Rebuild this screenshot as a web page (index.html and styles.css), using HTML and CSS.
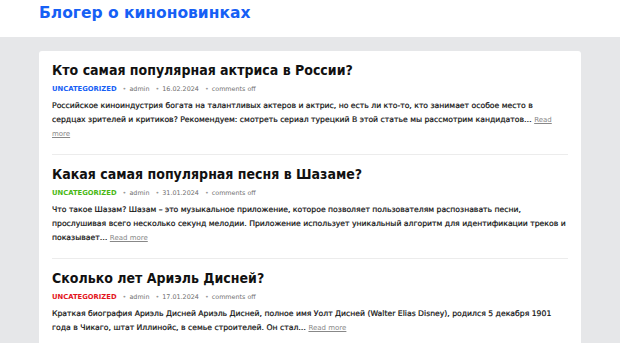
FILE: index.html
```html
<!DOCTYPE html>
<html>
  <head>
    <title>Блогер о киноновинках</title>
    <link rel="stylesheet" href="styles.css">
  </head>
  <body>
    <div class="topbar">
      <a class="site-title" href="#">Блогер о киноновинках</a>
    </div>
    <div class="page">
      <div class="content">
        <div class="post">
          <h2 class="post-title">Кто самая популярная актриса в России?</h2>
          <div class="meta">
            <span class="cat cat-blue">Uncategorized</span>
            <span class="dot">•</span> admin
            <span class="dot">•</span> 16.02.2024
            <span class="dot">•</span> comments off
          </div>
          <p class="excerpt">Российское киноиндустрия богата на талантливых актеров и актрис, но есть ли кто-то, кто занимает особое место в сердцах зрителей и критиков? Рекомендуем: смотреть сериал турецкий В этой статье мы рассмотрим кандидатов… <a class="more" href="#">Read more</a></p>
        </div>
        <div class="post">
          <h2 class="post-title">Какая самая популярная песня в Шазаме?</h2>
          <div class="meta">
            <span class="cat cat-green">Uncategorized</span>
            <span class="dot">•</span> admin
            <span class="dot">•</span> 31.01.2024
            <span class="dot">•</span> comments off
          </div>
          <p class="excerpt">Что такое Шазам? Шазам – это музыкальное приложение, которое позволяет пользователям распознавать песни, прослушивая всего несколько секунд мелодии. Приложение использует уникальный алгоритм для идентификации треков и показывает… <a class="more" href="#">Read more</a></p>
        </div>
        <div class="post">
          <h2 class="post-title">Сколько лет Ариэль Дисней?</h2>
          <div class="meta">
            <span class="cat cat-red">Uncategorized</span>
            <span class="dot">•</span> admin
            <span class="dot">•</span> 17.01.2024
            <span class="dot">•</span> comments off
          </div>
          <p class="excerpt">Краткая биография Ариэль Дисней Ариэль Дисней, полное имя Уолт Дисней (Walter Elias Disney), родился 5 декабря 1901 года в Чикаго, штат Иллинойс, в семье строителей. Он стал… <a class="more" href="#">Read more</a></p>
        </div>
      </div>
    </div>
  </body>
</html>
```

FILE: styles.css
```css
body {
  margin: 0;
  background-color: #e6e7e9;
  color: #222;
  font-family: 'DejaVu Sans', Verdana, sans-serif;
}

.topbar {
  background-color: #fff;
  height: 37px;
  padding: 0 39px;
  display: flex;
  align-items: center;
}

.site-title {
  color: #1660f5;
  font-size: 15.5px;
  font-weight: bold;
  text-decoration: none;
  margin-top: -11px;
}

.page {
  padding: 14px 39px 0 39px;
}

.content {
  width: 516px;
  background-color: #fff;
  border-radius: 3px;
  padding: 0 13px;
}

.post {
  padding: 9px 0 13px 0;
  border-bottom: 1px solid #ececec;
}

.post-title {
  margin: 0;
  font-size: 14px;
  font-stretch: condensed;
  line-height: 20px;
  font-weight: bold;
  color: #111;
}

.meta {
  margin-top: 3px;
  font-size: 6.4px;
  line-height: 12px;
  color: #6f6f6f;
}

.dot {
  color: #999;
  margin: 0 1px 0 4px;
}

.cat {
  font-weight: bold;
  text-transform: uppercase;
  font-size: 6.8px;
}

.cat-blue {
  color: #1660f5;
}

.cat-green {
  color: #4ab814;
}

.cat-red {
  color: #e3141c;
}

.excerpt {
  margin: 4px 0 0 0;
  font-size: 7.7px;
  line-height: 14px;
  color: #111;
  -webkit-text-stroke: 0.2px #111;
}

.more {
  color: #888;
  font-size: 7px;
  -webkit-text-stroke: 0;
}
```
